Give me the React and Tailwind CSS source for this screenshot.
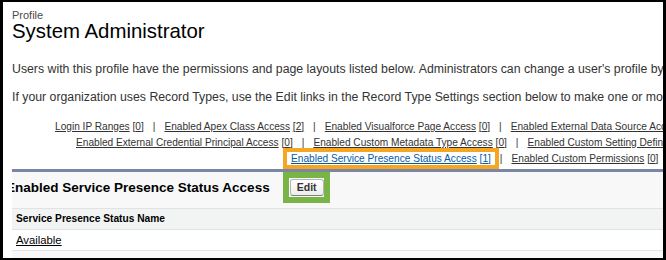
import React from 'react';

const Sep = () => <span className="mx-[9px]">|</span>;

const Linklet = ({ label, count, blue }) => (
  <span className={blue ? 'text-[#015ba7]' : ''}>
    <span className="underline">{label}</span> <span className="underline">[{count}]</span>
  </span>
);

const App = () => {
  return (
    <div className="w-[666px] h-[260px] bg-black pt-[2px] pb-[2px] pl-[3px] pr-[3px] font-['Liberation_Sans',Arial,sans-serif]">
      <div className="h-full bg-white overflow-hidden text-[#333]">
        {/* Page title */}
        <div className="pl-[9px] pt-[8px]">
          <div className="text-[11px] leading-[11px] text-[#4a4a4a]">Profile</div>
          <h1 className="text-[20.4px] leading-[20px] text-black">System Administrator</h1>
        </div>

        <div className="pl-[9px] text-[12.3px] leading-[13.5px] whitespace-nowrap">
          <p className="mt-[22px]">
            Users with this profile have the permissions and page layouts listed below. Administrators can change a user's profile by editing that user's personal information.
          </p>
          <p className="mt-[14.5px]">
            If your organization uses Record Types, use the Edit links in the Record Type Settings section below to make one or more record types available to users with this profile.
          </p>
        </div>

        {/* Related list links */}
        <div className="mt-[14.5px] text-[10.15px] leading-[16px] whitespace-nowrap">
          <div className="h-[16px] pl-[52px]">
            <Linklet label="Login IP Ranges" count="0" />
            <Sep />
            <Linklet label="Enabled Apex Class Access" count="2" />
            <Sep />
            <Linklet label="Enabled Visualforce Page Access" count="0" />
            <Sep />
            <Linklet label="Enabled External Data Source Access" count="0" />
          </div>
          <div className="h-[16px] pl-[73px]">
            <Linklet label="Enabled External Credential Principal Access" count="0" />
            <Sep />
            <Linklet label="Enabled Custom Metadata Type Access" count="0" />
            <Sep />
            <Linklet label="Enabled Custom Setting Definitions Access" count="0" />
          </div>
          <div className="h-[16px] pl-[288px]">
            <span className="relative inline-block">
              <Linklet label="Enabled Service Presence Status Access" count="1" blue />
              <span className="absolute -left-[8px] -right-[8px] -top-[3px] -bottom-[2px] border-4 border-[#f5a623] pointer-events-none" />
            </span>
            <Sep />
            <Linklet label="Enabled Custom Permissions" count="0" />
          </div>
        </div>

        {/* Section */}
        <div className="mt-[2px] ml-[9px] border-t-[3px] border-[#7a86a3] bg-[#f8f8f8] overflow-hidden">
          <div className="h-[36px] flex items-start pt-[7px] whitespace-nowrap">
            <h3 className="-ml-[6px] mt-[1px] shrink-0 text-[13.5px] leading-[16px] font-bold text-black">
              Enabled Service Presence Status Access
            </h3>
            <div className="relative ml-[20px] shrink-0">
              <button className="block w-[34px] h-[17px] border border-[#b5b5b5] border-b-[#7f7f7f] rounded-[3px] bg-linear-to-b from-white to-[#ededed] text-[10.5px] leading-none font-bold text-[#333]">
                Edit
              </button>
              <span className="absolute -left-[7px] -right-[6px] -top-[7px] -bottom-[7px] border-[6px] border-[#79b546] pointer-events-none" />
            </div>
          </div>

          <div className="h-[21px] border-t border-[#e0e3e5] bg-[#f2f3f3] flex items-center pl-[4px] text-[10.2px] font-bold text-black">
            Service Presence Status Name
          </div>
          <div className="h-[22px] border-y border-[#e0e3e5] bg-white flex items-center pl-[4px] text-[11.3px] text-black">
            <span className="underline">Available</span>
          </div>
          <div className="h-[20px]" />
        </div>
      </div>
    </div>
  );
};

export default App;
